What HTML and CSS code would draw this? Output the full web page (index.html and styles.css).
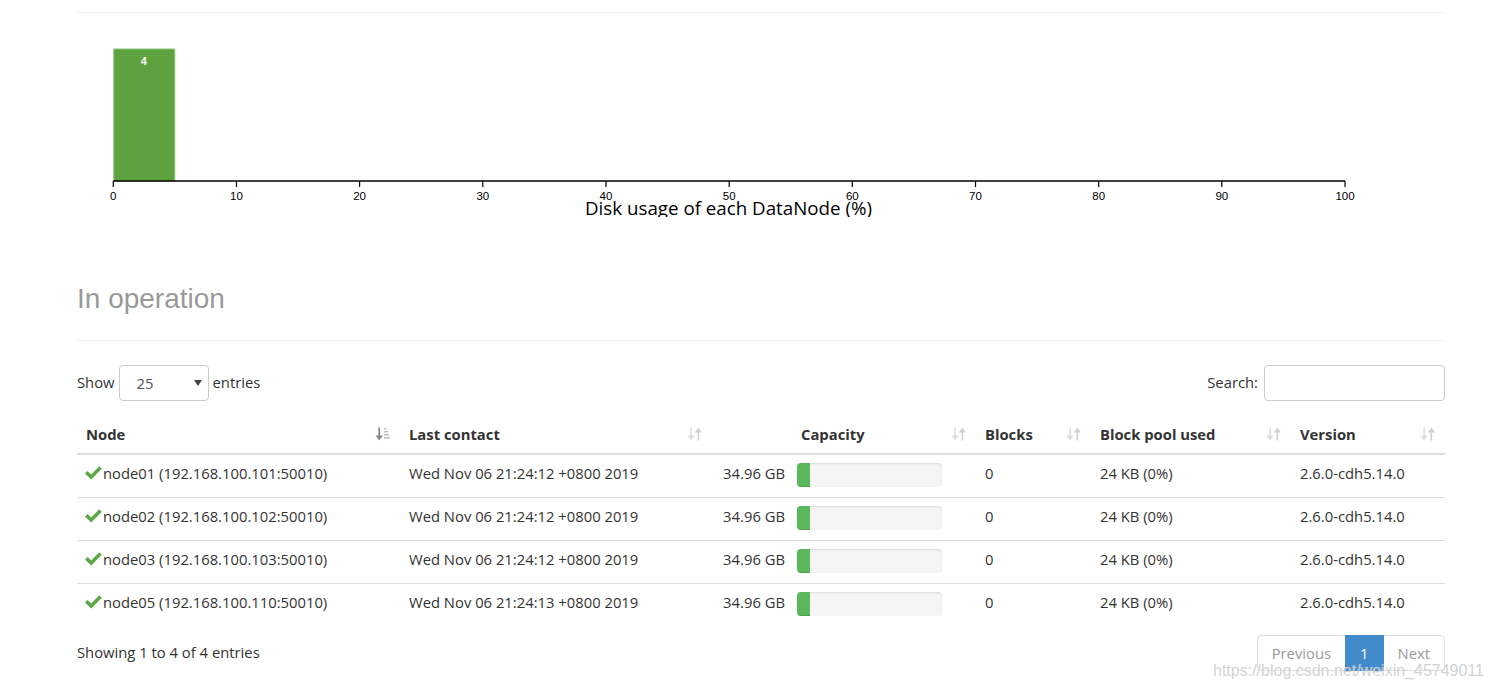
FILE: index.html
```html
<!DOCTYPE html>
<html lang="en">
<head>
<meta charset="utf-8">
<title>DataNode Information</title>
<link rel="stylesheet" href="styles.css">
</head>
<body>
<div class="page">
  <hr class="rule-top">
  <svg class="chart" width="1368" height="204" viewBox="0 0 1368 204">
    <rect class="bar" x="36.8" y="36" width="61" height="132"></rect>
    <text class="bar-label" x="66.7" y="52">4</text>
    <g class="axis">
      <line class="axis-line" x1="36.3" y1="168" x2="1268" y2="168"></line>
      <g class="ticks">
        <line x1="36.3" y1="168" x2="36.3" y2="174"></line>
        <line x1="159.5" y1="168" x2="159.5" y2="174"></line>
        <line x1="282.6" y1="168" x2="282.6" y2="174"></line>
        <line x1="405.8" y1="168" x2="405.8" y2="174"></line>
        <line x1="529" y1="168" x2="529" y2="174"></line>
        <line x1="652.2" y1="168" x2="652.2" y2="174"></line>
        <line x1="775.3" y1="168" x2="775.3" y2="174"></line>
        <line x1="898.5" y1="168" x2="898.5" y2="174"></line>
        <line x1="1021.7" y1="168" x2="1021.7" y2="174"></line>
        <line x1="1144.8" y1="168" x2="1144.8" y2="174"></line>
        <line x1="1268" y1="168" x2="1268" y2="174"></line>
      </g>
      <g class="tick-labels">
        <text x="36.3" y="187">0</text>
        <text x="159.5" y="187">10</text>
        <text x="282.6" y="187">20</text>
        <text x="405.8" y="187">30</text>
        <text x="529" y="187">40</text>
        <text x="652.2" y="187">50</text>
        <text x="775.3" y="187">60</text>
        <text x="898.5" y="187">70</text>
        <text x="1021.7" y="187">80</text>
        <text x="1144.8" y="187">90</text>
        <text x="1268" y="187">100</text>
      </g>
      <text class="axis-title" x="651.5" y="201.5" textLength="287" lengthAdjust="spacingAndGlyphs">Disk usage of each DataNode (%)</text>
    </g>
  </svg>

  <h2 class="section-title">In operation</h2>
  <hr class="rule">

  <div class="controls">
    <label class="length">Show
      <span class="select"><span class="select-value">25</span><svg class="caret" width="8" height="6" viewBox="0 0 8 6"><polygon points="0,0 8,0 4,6"></polygon></svg></span>
      entries</label>
    <label class="search">Search: <input class="search-input" type="search"></label>
  </div>

  <table class="nodes">
    <colgroup>
      <col class="c-node">
      <col class="c-contact">
      <col class="c-capnum">
      <col class="c-cap">
      <col class="c-blocks">
      <col class="c-pool">
      <col class="c-ver">
    </colgroup>
    <thead>
      <tr>
        <th><div class="th-in">Node<svg class="sort" width="16" height="14" viewBox="0 0 16 14"><rect x="3.3" y="0.5" width="1.8" height="10" fill="#8a8a8a"></rect><polygon points="0.5,8.4 7.9,8.4 4.2,13.6" fill="#8a8a8a"></polygon><rect x="9" y="1" width="2.6" height="1.5" fill="#bdbdbd"></rect><rect x="9" y="4" width="3.8" height="1.5" fill="#bdbdbd"></rect><rect x="9" y="7" width="5" height="1.5" fill="#bdbdbd"></rect><rect x="9" y="10" width="6.2" height="1.5" fill="#bdbdbd"></rect></svg></div></th>
        <th><div class="th-in">Last contact<svg class="sort" width="16" height="14" viewBox="0 0 16 14"><rect x="3.3" y="0.5" width="1.6" height="10" fill="#dedede"></rect><polygon points="0.6,8.6 7.6,8.6 4.1,13.5" fill="#dedede"></polygon><rect x="10.6" y="3.5" width="1.6" height="10" fill="#cfcfcf"></rect><polygon points="7.9,5.4 14.9,5.4 11.4,0.5" fill="#cfcfcf"></polygon></svg></div></th>
        <th></th>
        <th><div class="th-in">Capacity<svg class="sort" width="16" height="14" viewBox="0 0 16 14"><rect x="3.3" y="0.5" width="1.6" height="10" fill="#dedede"></rect><polygon points="0.6,8.6 7.6,8.6 4.1,13.5" fill="#dedede"></polygon><rect x="10.6" y="3.5" width="1.6" height="10" fill="#cfcfcf"></rect><polygon points="7.9,5.4 14.9,5.4 11.4,0.5" fill="#cfcfcf"></polygon></svg></div></th>
        <th><div class="th-in">Blocks<svg class="sort" width="16" height="14" viewBox="0 0 16 14"><rect x="3.3" y="0.5" width="1.6" height="10" fill="#dedede"></rect><polygon points="0.6,8.6 7.6,8.6 4.1,13.5" fill="#dedede"></polygon><rect x="10.6" y="3.5" width="1.6" height="10" fill="#cfcfcf"></rect><polygon points="7.9,5.4 14.9,5.4 11.4,0.5" fill="#cfcfcf"></polygon></svg></div></th>
        <th><div class="th-in">Block pool used<svg class="sort" width="16" height="14" viewBox="0 0 16 14"><rect x="3.3" y="0.5" width="1.6" height="10" fill="#dedede"></rect><polygon points="0.6,8.6 7.6,8.6 4.1,13.5" fill="#dedede"></polygon><rect x="10.6" y="3.5" width="1.6" height="10" fill="#cfcfcf"></rect><polygon points="7.9,5.4 14.9,5.4 11.4,0.5" fill="#cfcfcf"></polygon></svg></div></th>
        <th><div class="th-in">Version<svg class="sort" width="16" height="14" viewBox="0 0 16 14"><rect x="3.3" y="0.5" width="1.6" height="10" fill="#dedede"></rect><polygon points="0.6,8.6 7.6,8.6 4.1,13.5" fill="#dedede"></polygon><rect x="10.6" y="3.5" width="1.6" height="10" fill="#cfcfcf"></rect><polygon points="7.9,5.4 14.9,5.4 11.4,0.5" fill="#cfcfcf"></polygon></svg></div></th>
      </tr>
    </thead>
    <tbody>
      <tr>
        <td><svg class="ok" width="17" height="14" viewBox="0 0 17 14"><polygon points="0,7.6 2.6,5 6.2,8.4 14.2,0.2 16.8,2.8 6.2,13.4"></polygon></svg>node01 (192.168.100.101:50010)</td>
        <td>Wed Nov 06 21:24:12 +0800 2019</td>
        <td class="num">34.96 GB</td>
        <td class="cap"><div class="progress"><div class="progress-fill"></div></div></td>
        <td>0</td>
        <td>24 KB (0%)</td>
        <td>2.6.0-cdh5.14.0</td>
      </tr>
      <tr>
        <td><svg class="ok" width="17" height="14" viewBox="0 0 17 14"><polygon points="0,7.6 2.6,5 6.2,8.4 14.2,0.2 16.8,2.8 6.2,13.4"></polygon></svg>node02 (192.168.100.102:50010)</td>
        <td>Wed Nov 06 21:24:12 +0800 2019</td>
        <td class="num">34.96 GB</td>
        <td class="cap"><div class="progress"><div class="progress-fill"></div></div></td>
        <td>0</td>
        <td>24 KB (0%)</td>
        <td>2.6.0-cdh5.14.0</td>
      </tr>
      <tr>
        <td><svg class="ok" width="17" height="14" viewBox="0 0 17 14"><polygon points="0,7.6 2.6,5 6.2,8.4 14.2,0.2 16.8,2.8 6.2,13.4"></polygon></svg>node03 (192.168.100.103:50010)</td>
        <td>Wed Nov 06 21:24:12 +0800 2019</td>
        <td class="num">34.96 GB</td>
        <td class="cap"><div class="progress"><div class="progress-fill"></div></div></td>
        <td>0</td>
        <td>24 KB (0%)</td>
        <td>2.6.0-cdh5.14.0</td>
      </tr>
      <tr>
        <td><svg class="ok" width="17" height="14" viewBox="0 0 17 14"><polygon points="0,7.6 2.6,5 6.2,8.4 14.2,0.2 16.8,2.8 6.2,13.4"></polygon></svg>node05 (192.168.100.110:50010)</td>
        <td>Wed Nov 06 21:24:13 +0800 2019</td>
        <td class="num">34.96 GB</td>
        <td class="cap"><div class="progress"><div class="progress-fill"></div></div></td>
        <td>0</td>
        <td>24 KB (0%)</td>
        <td>2.6.0-cdh5.14.0</td>
      </tr>
    </tbody>
  </table>

  <div class="table-foot">
    <div class="info">Showing 1 to 4 of 4 entries</div>
    <ul class="pagination">
      <li class="pg disabled">Previous</li>
      <li class="pg active">1</li>
      <li class="pg disabled">Next</li>
    </ul>
  </div>
</div>
<div class="watermark">https://blog.csdn.net/weixin_45749011</div>
</body>
</html>
```
FILE: styles.css
```css
html, body {
  margin: 0;
  padding: 0;
  background: #fff;
}
body {
  position: relative;
  width: 1492px;
  height: 691px;
  overflow: hidden;
  font-family: "Open Sans", "Noto Sans", sans-serif;
  font-size: 14.8px;
  line-height: 20px;
  color: #333;
}
.page {
  width: 1368px;
  margin-left: 77px;
  padding-top: 12px;
}
.rule-top {
  margin: 0;
  border: 0;
  border-top: 1px solid #eee;
  height: 0;
}
.chart {
  display: block;
  overflow: hidden;
}
.bar {
  fill: #5da23e;
  stroke: #8fc27a;
  stroke-width: 1;
}
.bar-label {
  fill: #fff;
  font-family: "Liberation Sans", Arial, sans-serif;
  font-size: 11px;
  font-weight: bold;
  text-anchor: middle;
}
.axis-line {
  stroke: #000;
  stroke-width: 1.6;
}
.ticks line {
  stroke: #000;
  stroke-width: 1.2;
}
.tick-labels text {
  font-family: "Liberation Sans", Arial, sans-serif;
  font-size: 11.5px;
  fill: #000;
  text-anchor: middle;
}
.axis-title {
  font-family: "Open Sans", "Noto Sans", sans-serif;
  font-size: 17.5px;
  fill: #000;
  text-anchor: middle;
}
.section-title {
  margin: 66px 0 0;
  font-family: "Liberation Sans", Arial, sans-serif;
  font-size: 28px;
  line-height: 31px;
  font-weight: normal;
  color: #999;
}
.rule {
  margin: 26px 0 0;
  border: 0;
  border-top: 1px solid #eee;
  height: 0;
}
.controls {
  margin-top: 24px;
  height: 36px;
  display: flex;
  justify-content: space-between;
  align-items: center;
}
.length, .search {
  display: flex;
  align-items: center;
  gap: 4px;
  margin-top: -2px;
}
.search {
  gap: 6px;
}
.select {
  box-sizing: border-box;
  width: 90px;
  height: 36px;
  margin-top: 2px;
  border: 1px solid #ccc;
  border-radius: 4px;
  display: flex;
  align-items: center;
  justify-content: space-between;
  padding: 0 6px 0 17px;
  color: #555;
}
.caret polygon {
  fill: #444;
}
.search-input {
  box-sizing: border-box;
  width: 181px;
  height: 36px;
  margin: 2px 0 0;
  border: 1px solid #ccc;
  border-radius: 4px;
  padding: 6px 12px;
  font: inherit;
  outline: none;
}
.nodes {
  margin-top: 16px;
  width: 1368px;
  table-layout: fixed;
  border-collapse: collapse;
  border-spacing: 0;
}
.c-node { width: 323px; }
.c-contact { width: 312px; }
.c-capnum { width: 80px; }
.c-cap { width: 184px; }
.c-blocks { width: 115px; }
.c-pool { width: 200px; }
.c-ver { width: 154px; }
.nodes th {
  text-align: left;
  font-weight: bold;
  padding: 7px 9px 9px 9px;
  line-height: 20px;
  border-bottom: 2px solid #ddd;
  vertical-align: bottom;
}
.th-in {
  display: flex;
  justify-content: space-between;
  align-items: center;
}
.sort {
  flex: none;
}
.nodes td {
  padding: 8px 9px 10px;
  line-height: 20px;
  border-top: 1px solid #ddd;
  vertical-align: top;
  white-space: nowrap;
}
.nodes tbody tr:first-child td {
  border-top: 0;
}
.ok {
  vertical-align: -1px;
  margin-left: -1px;
  margin-right: 1px;
}
.ok polygon {
  fill: #5aa846;
}
.nodes td.num {
  text-align: right;
  padding-right: 7px;
}
.nodes td.cap {
  padding-left: 5px;
}
.progress {
  width: 145px;
  height: 24px;
  border-radius: 4px;
  background: #f5f5f5;
  box-shadow: inset 0 1px 2px rgba(0, 0, 0, 0.1);
  overflow: hidden;
}
.progress-fill {
  width: 13px;
  height: 100%;
  background: #5cb85c;
  box-shadow: inset 0 -1px 0 rgba(0, 0, 0, 0.15);
}
.table-foot {
  margin-top: 9px;
  display: flex;
  justify-content: space-between;
  align-items: center;
}
.info {
  margin-top: -2px;
}
.pagination {
  list-style: none;
  margin: 0;
  padding: 0;
  display: flex;
}
.pg {
  padding: 7px 14px;
  line-height: 20px;
  border: 1px solid #ddd;
  margin-left: -1px;
  color: #999;
  background: #fff;
}
.pg:first-child {
  border-radius: 4px 0 0 4px;
}
.pg:last-child {
  border-radius: 0 4px 4px 0;
}
.pg.active {
  background: #428bca;
  border-color: #428bca;
  color: #fff;
  position: relative;
}
.watermark {
  position: absolute;
  left: 1213px;
  top: 661px;
  font-family: "Liberation Sans", Arial, sans-serif;
  font-size: 16px;
  line-height: 20px;
  color: rgba(190, 190, 190, 0.7);
  text-shadow: 0 0 1px rgba(255, 255, 255, 0.8);
  white-space: nowrap;
}
```
